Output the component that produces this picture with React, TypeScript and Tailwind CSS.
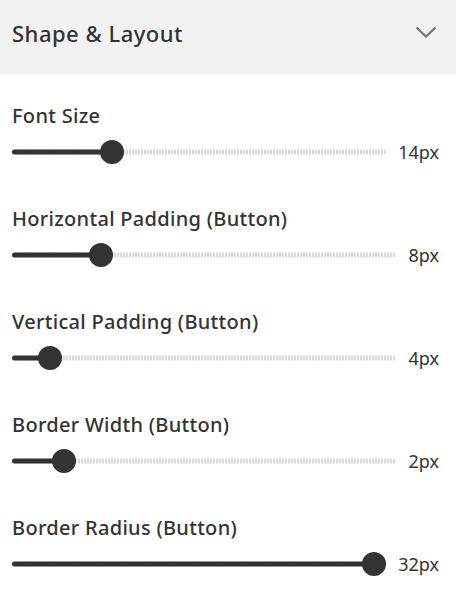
import React from 'react';

type Setting = {
  label: string;
  value: string;
  pct: number; // thumb centre as % of track width
};

const settings: Setting[] = [
  { label: 'Font Size', value: '14px', pct: 26.7 },
  { label: 'Horizontal Padding (Button)', value: '8px', pct: 23.1 },
  { label: 'Vertical Padding (Button)', value: '4px', pct: 9.9 },
  { label: 'Border Width (Button)', value: '2px', pct: 13.5 },
  { label: 'Border Radius (Button)', value: '32px', pct: 96.8 },
];

function Slider({ label, value, pct }: Setting) {
  return (
    <div className="flex flex-col">
      <div className="h-[26px] flex items-center text-[20px] font-medium tracking-[0.3px] text-[#333] leading-none">
        {label}
      </div>
      <div className="mt-[11px] flex items-center gap-3 h-6">
        <div className="relative flex-1 h-6">
          <div className="absolute top-1/2 -translate-y-1/2 inset-x-0 h-[5px] rounded-full bg-[repeating-linear-gradient(90deg,#d8d8d8_0_2px,transparent_2px_3px)]" />
          <div
            className="absolute left-0 top-1/2 -translate-y-1/2 h-[5px] rounded-full bg-[#333]"
            style={{ width: `${pct}%` }}
          />
          <div
            className="absolute top-0 size-6 -ml-3 rounded-full bg-[#333]"
            style={{ left: `${pct}%` }}
          />
        </div>
        <span className="text-[18px] text-[#333] leading-none">{value}</span>
      </div>
    </div>
  );
}

export default function App() {
  return (
    <div
      className="w-[456px] h-[595px] bg-white overflow-hidden"
      style={{ fontFamily: '"Noto Sans", "Open Sans", sans-serif' }}
    >
      <div className="h-[75px] bg-[#f2f2f2] flex items-center justify-between pl-3 pr-[19px]">
        <h2 className="text-[22px] font-medium tracking-[0.5px] text-[#333] pb-[8px]">Shape &amp; Layout</h2>
        <svg width="22" height="13" viewBox="0 0 22 13" className="mb-[10px]" fill="none">
          <polyline points="1.5,1.5 11,10.5 20.5,1.5" stroke="#7a7a7a" strokeWidth="2.4" />
        </svg>
      </div>
      <div className="pt-[28px] pl-3 pr-[17px] flex flex-col gap-[42px]">
        {settings.map((s) => (
          <Slider key={s.label} {...s} />
        ))}
      </div>
    </div>
  );
}
